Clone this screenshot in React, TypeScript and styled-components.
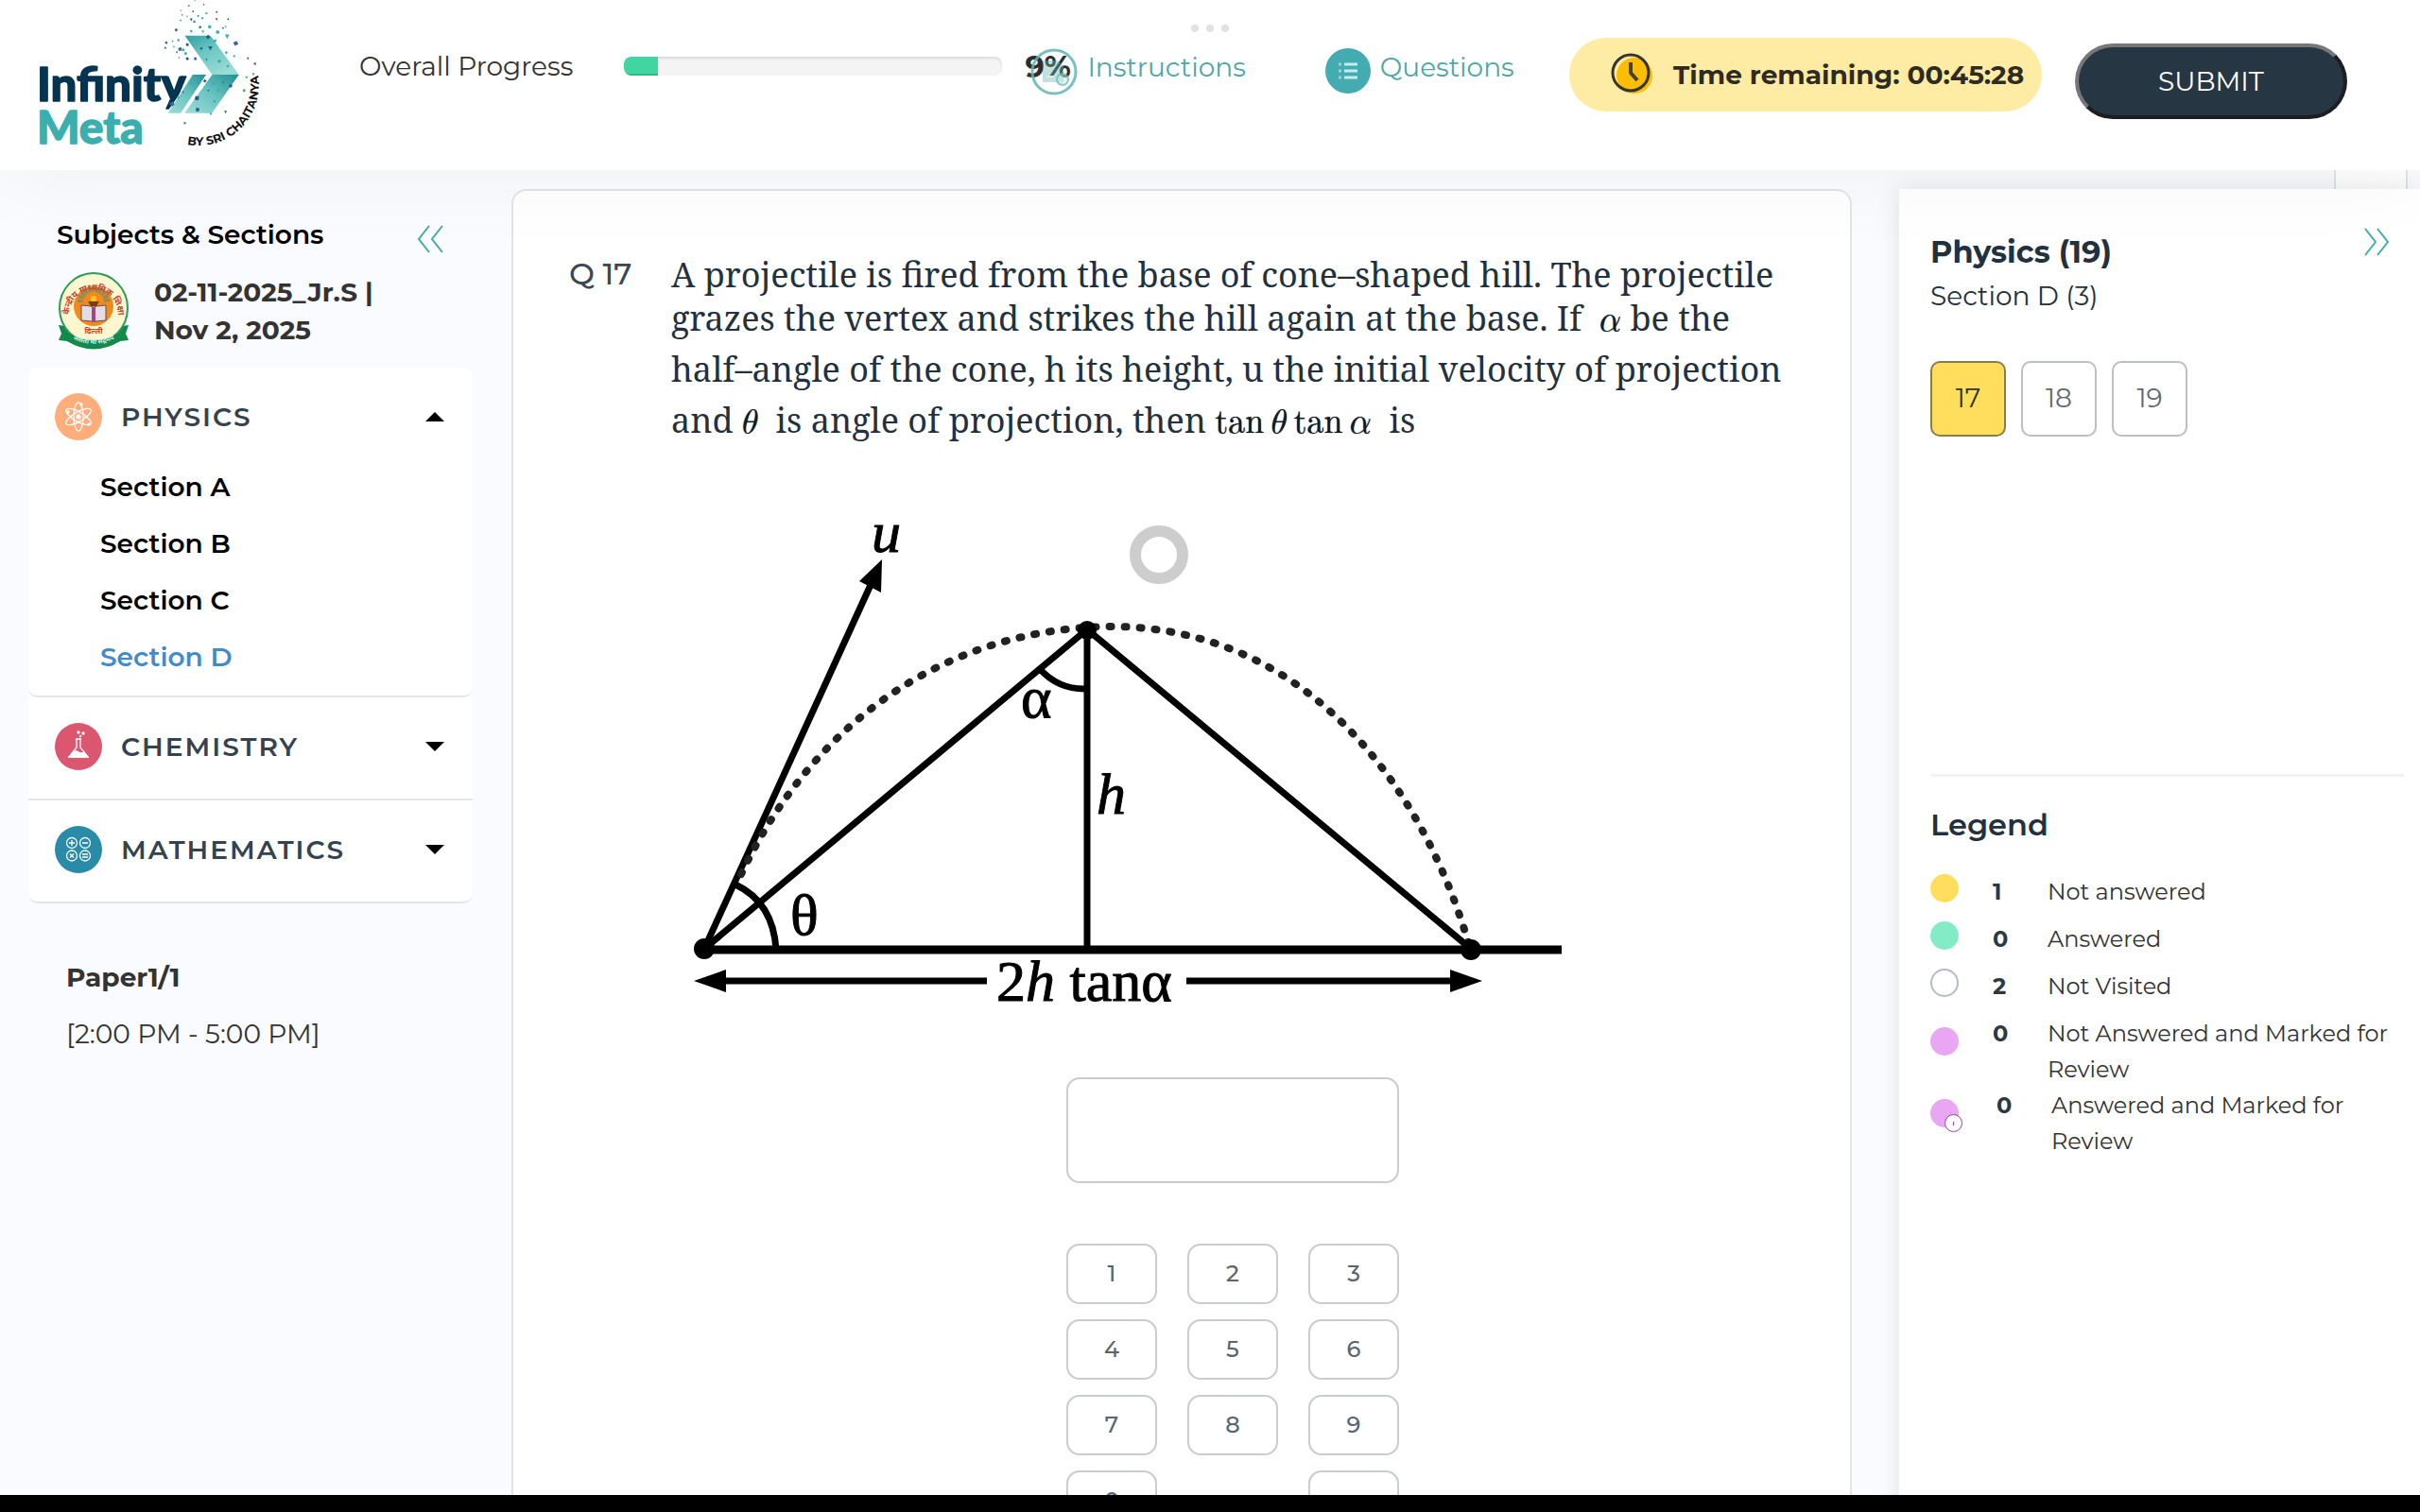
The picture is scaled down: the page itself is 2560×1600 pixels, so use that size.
import React, { useState } from "react";
import styled, { createGlobalStyle, css } from "styled-components";

const sans = `Montserrat, Inter, "Open Sans", sans-serif`;
const serif = `"Noto Serif", "DejaVu Serif", serif`;
const mathFont = `"Latin Modern Math", "STIX Two Math", "Liberation Serif", serif`;
const teal = "#4fa7a6";
const ink = "#22313d";

const GlobalStyle = createGlobalStyle`
  *, *::before, *::after { box-sizing: border-box; }
  body { margin: 0; font-family: ${sans}; color: #333; font-size: 28px; background: #fafbff; }
  h1, h2, h3, p, ul { margin: 0; padding: 0; font-size: inherit; font-weight: inherit; }
  ul { list-style: none; }
  button, input { font-family: inherit; color: inherit; }
  a { color: inherit; text-decoration: none; }
  svg { display: block; }
`;

const Page = styled.div`
  height: 100vh;
  display: flex;
  flex-direction: column;
  overflow: hidden;
`;

/* ---------- header ---------- */

const Header = styled.header`
  position: relative;
  z-index: 2;
  flex: none;
  display: flex;
  align-items: flex-start;
  height: 180px;
  padding: 0 77px 0 20px;
  background: #fff;
  box-shadow: 0 0 100px rgba(0, 0, 0, 0.05);
`;

const LogoLink = styled.a`
  flex: none;
  width: 270px;
`;

const Progress = styled.div`
  display: flex;
  align-items: center;
  height: 40px;
  margin: 50px 0 0 90px;
  white-space: nowrap;
`;

const ProgressTrack = styled.div`
  width: 400px;
  height: 20px;
  margin: 0 24px 0 54px;
  border-radius: 8px;
  background: #f4f4f4;
  box-shadow: inset 0 2px 3px rgba(0, 0, 0, 0.1);
  overflow: hidden;
`;

const ProgressFill = styled.div`
  height: 100%;
  background: #3fd6a1;
  box-shadow: inset 0 -2px 0 rgba(0, 0, 0, 0.15);
`;

const Percent = styled.strong`
  width: 44px;
  font-size: 32px;
  font-weight: 700;
  color: #2d2d2d;
`;

const Nav = styled.nav`
  display: flex;
  gap: 84px;
  margin: 51px 0 0 -38px;
`;

const NavLink = styled.a`
  display: flex;
  gap: 10px;
  line-height: 40px;
  color: ${teal};
`;

const Actions = styled.div`
  display: flex;
  align-items: flex-start;
  gap: 35px;
  margin-left: auto;
`;

const Timer = styled.div`
  display: flex;
  align-items: center;
  gap: 16px;
  width: 500px;
  height: 78px;
  margin-top: 40px;
  padding-left: 40px;
  border-radius: 39px;
  background: #ffeca4;
  font-weight: 700;
  color: #2e2c22;
  white-space: nowrap;
`;

const Submit = styled.button`
  width: 288px;
  height: 80px;
  margin-top: 46px;
  border: 4px solid;
  border-color: #757779 #1c1f21 #1c1f21 #757779;
  border-radius: 40px;
  background: #263642;
  color: #fff;
  font-size: 28px;
`;

const MoreDots = styled.div`
  position: absolute;
  top: 26px;
  left: 50%;
  display: flex;
  gap: 8px;
  transform: translateX(-50%);
  i {
    width: 8px;
    height: 8px;
    border-radius: 50%;
    background: #e2e2e2;
  }
`;

/* ---------- columns ---------- */

const Columns = styled.main`
  flex: 1;
  min-height: 0;
  position: relative;
  display: grid;
  grid-template-columns: 470px minmax(0, 1fr) 551px;
  padding-left: 30px;
  overflow: hidden;
`;

const SystemBar = styled.div`
  position: relative;
  z-index: 3;
  flex: none;
  height: 18px;
  background: #000;
`;

/* ---------- left sidebar ---------- */

const Sidebar = styled.aside`
  padding-top: 48px;
`;

const SidebarHead = styled.div`
  display: flex;
  justify-content: space-between;
  align-items: flex-end;
  padding: 0 30px;
  height: 40px;
  font-weight: 600;
  line-height: 40px;
  color: #000;
`;

const IconButton = styled.button`
  display: flex;
  padding: 0;
  border: 0;
  background: none;
  cursor: pointer;
`;

const Exam = styled.div`
  display: flex;
  align-items: center;
  gap: 25px;
  padding: 20px 0 19px 30px;
  font-weight: 700;
  line-height: 40px;
  white-space: pre-line;
`;

const Subject = styled.section`
  padding-bottom: 3px;
  border-bottom: 2px solid #e3e5e7;
  border-radius: 10px;
  background: #fff;
  & + & { border-top-left-radius: 0; border-top-right-radius: 0; }
  &:nth-child(2) { border-radius: 0; }
`;

const SubjectToggle = styled.button`
  display: flex;
  align-items: center;
  gap: 20px;
  width: 100%;
  height: 104px;
  padding: 0 30px 0 28px;
  border: 0;
  background: none;
  font-size: 28px;
  font-weight: 600;
  letter-spacing: 2px;
  color: #34434f;
  svg:last-child { margin-left: auto; }
`;

const SectionList = styled.ul`
  margin-top: -8px;
  padding: 0 0 8px 76px;
`;

const SectionLink = styled.a<{ $active: boolean }>`
  display: block;
  line-height: 60px;
  font-weight: 600;
  color: ${(p) => (p.$active ? "#428bca" : "#000")};
`;

const Paper = styled.div`
  padding: 48px 40px 0;
  line-height: 60px;
  strong { font-weight: 700; display: block; }
`;

/* ---------- question ---------- */

const QuestionCard = styled.section`
  display: grid;
  grid-template-columns: 108px minmax(0, 1fr);
  align-content: start;
  margin: 20px 50px 0 41px;
  padding: 66px 59px 0;
  border: 2px solid #e2e4e6;
  border-bottom: 0;
  border-radius: 16px 16px 0 0;
  background: #fff;
`;

const QuestionNumber = styled.h2`
  line-height: 44px;
  font-size: 32px;
  font-weight: 500;
  color: #3a4854;
`;

const QuestionText = styled.p`
  font-family: ${serif};
  font-size: 36px;
  line-height: 46px;
  color: ${ink};
`;

const Maths = styled.span<{ $above?: boolean; $below?: boolean }>`
  display: inline-block;
  font-family: ${mathFont};
  font-size: 36px;
  line-height: 36px;
  white-space: nowrap;
  color: #101c26;
  text-shadow: 0 0 1px #101c26;
  ${(p) => p.$above && css`padding-top: 15px;`}
  ${(p) => p.$below && css`padding-bottom: 11px;`}
`;

const Figure = styled.figure`
  margin: 77px 0 0 10px;
  svg { width: 940px; max-width: 100%; height: auto; }
  text { font-family: "Liberation Serif", "Times New Roman", serif; font-size: 62px; stroke: #000; stroke-width: 1; }
`;

const AnswerPad = styled.div`
  display: grid;
  grid-template-columns: repeat(3, 96px);
  gap: 16px 32px;
  justify-content: center;
  margin-top: 70px;
`;

const AnswerInput = styled.input`
  grid-column: 1 / -1;
  width: 100%;
  height: 112px;
  margin-bottom: 48px;
  padding: 0 24px;
  border: 2px solid #c8cdd1;
  border-radius: 14px;
  background: #fff;
  font-size: 32px;
`;

const Key = styled.button`
  height: 64px;
  padding: 0 0 2px;
  border: 2px solid #c8cdd1;
  border-radius: 14px;
  background: #fff;
  font-size: 24px;
  font-weight: 500;
  color: #5a6570;
`;

/* ---------- palette ---------- */

const DrawerTab = styled.div`
  position: absolute;
  top: -20px;
  right: 13px;
  width: 78px;
  height: 60px;
  border: 2px solid #e2e4e6;
  background: #fff;
`;

const Palette = styled.aside`
  position: relative;
  margin-top: 20px;
  padding: 41px 17px 0 33px;
  background: #fff;
  box-shadow: 0 0 24px rgba(0, 0, 0, 0.1);
`;

const PaletteHead = styled.div`
  display: flex;
  justify-content: space-between;
  align-items: flex-start;
  padding-right: 14px;
  color: ${ink};
  h2 { font-size: 32px; font-weight: 700; line-height: 52px; }
  p { line-height: 40px; }
`;

const NumberGrid = styled.div`
  display: flex;
  gap: 16px;
  height: 489px;
  padding-top: 49px;
  border-bottom: 3px solid #f1f2f6;
`;

const NumberButton = styled.button<{ $current: boolean }>`
  width: 80px;
  height: 80px;
  padding: 0 0 2px;
  border: 2px solid ${(p) => (p.$current ? "#8a7d4c" : "#b9bfc4")};
  border-radius: 10px;
  background: ${(p) => (p.$current ? "#ffde5e" : "#fff")};
  color: ${(p) => (p.$current ? "#33322a" : "#5f6a73")};
  font-size: 28px;
`;

const LegendTitle = styled.h3`
  margin: 31px 0 26px;
  font-size: 32px;
  font-weight: 600;
  line-height: 40px;
  color: ${ink};
`;

const LegendItem = styled.li<{ $tall: boolean; $shift: boolean }>`
  display: grid;
  grid-template-columns: ${(p) => (p.$shift ? "70px 58px 1fr" : "66px 58px 1fr")};
  padding: ${(p) => (p.$shift ? "0" : p.$tall ? "6px 0 0" : "6px 0")};
  font-size: 24px;
  line-height: 38px;
  strong { font-weight: 700; color: #2b3944; }
  span { min-width: 0; max-width: 370px; }
`;

const Dot = styled.div<{ $color: string; $outline: boolean; $low: boolean }>`
  position: relative;
  width: 30px;
  height: 30px;
  margin-top: ${(p) => (p.$low ? "12px" : "0")};
  border-radius: 50%;
  background: ${(p) => p.$color};
  border: ${(p) => (p.$outline ? "2px solid #b5bcc4" : "0")};
`;

const DotBadge = styled.b`
  position: absolute;
  left: 15px;
  top: 16px;
  width: 19px;
  height: 19px;
  border: 1px solid #a13bb8;
  border-radius: 50%;
  background: #fff;
  &::after {
    content: "";
    position: absolute;
    left: 8px;
    top: 7px;
    width: 1px;
    height: 4px;
    background: #a13bb8;
  }
`;

/* The touch cursor floats above the question. */
const TouchRing = styled.div`
  position: absolute;
  z-index: 1;
  left: 1195px;
  top: 376px;
  width: 62px;
  height: 62px;
  border: 12px solid #cdcdcd;
  border-radius: 50%;
  background: #fff;
`;

/* ---------- drawings ---------- */

const specks: [number, number, number, string][] = [
  [552, 3, 4, "#3a9aa0"], [533, 18, 5, "#2f8f99"], [580, 14, 4, "#2b6d99"], [508, 34, 5, "#3a9aa0"], [546, 36, 5, "#2b6d99"],
  [588, 42, 6, "#3aafad"], [512, 48, 6, "#4a6fa8"], [562, 50, 5, "#2b6d99"], [620, 38, 5, "#2b6d99"], [540, 62, 9, "#275c88"],
  [575, 57, 6, "#3aafad"], [550, 68, 7, "#3a9aa0"], [620, 61, 8, "#3b62a0"], [656, 60, 5, "#2b6d99"], [507, 64, 5, "#3aafad"],
  [528, 52, 5, "#3b62a0"], [598, 84, 9, "#3aafad"], [568, 85, 7, "#2b6d99"], [648, 85, 7, "#3aafad"], [493, 94, 8, "#3b62a0"],
  [540, 98, 7, "#3aafad"], [577, 100, 9, "#3aafad"], [623, 101, 10, "#3aafad"], [640, 88, 5, "#2b6d99"], [653, 115, 14, "#3aafad"],
  [680, 136, 12, "#3b62a0"], [500, 126, 7, "#3aafad"], [482, 130, 5, "#3b62a0"], [462, 134, 7, "#3b62a0"], [459, 150, 6, "#4a6fa8"],
  [486, 148, 7, "#3aafad"], [505, 154, 10, "#3b62a0"], [528, 140, 8, "#275c88"], [495, 165, 7, "#275c88"], [523, 168, 8, "#3aafad"],
  [528, 184, 8, "#275c88"], [502, 182, 6, "#3aafad"], [553, 184, 8, "#2b6d99"], [515, 156, 8, "#3aafad"], [545, 122, 10, "#3aafad"],
  [593, 116, 10, "#275c88"], [615, 128, 8, "#3aafad"], [600, 152, 14, "#275c88"], [572, 152, 7, "#3b62a0"], [650, 165, 7, "#3aafad"],
  [588, 188, 7, "#2b6d99"], [628, 192, 9, "#3aafad"], [675, 176, 6, "#3aafad"], [718, 184, 8, "#3b62a0"], [740, 200, 7, "#4a6fa8"],
  [655, 208, 7, "#3aafad"], [714, 244, 9, "#3aafad"], [735, 232, 6, "#3aafad"], [664, 270, 9, "#275c88"], [640, 260, 7, "#3b62a0"],
  [583, 254, 8, "#275c88"], [610, 262, 8, "#3aafad"], [625, 285, 9, "#3aafad"], [706, 284, 8, "#3aafad"], [558, 308, 12, "#275c88"],
  [594, 285, 7, "#3b62a0"], [540, 262, 7, "#3aafad"], [480, 326, 12, "#3b62a0"], [500, 308, 9, "#3aafad"], [560, 344, 10, "#275c88"],
  [613, 318, 7, "#3aafad"], [648, 352, 9, "#3b62a0"], [602, 357, 6, "#3aafad"], [520, 386, 6, "#3b62a0"], [515, 290, 7, "#3b62a0"],
];

function Logo() {
  return (
    <svg viewBox="0 0 800 510" width="270" height="172" role="img" aria-label="Infinity Meta by Sri Chaitanya">
      <defs>
        <linearGradient id="upper" x1="0" y1="0" x2="0.7" y2="1">
          <stop offset="0" stopColor="#2f9ea1" />
          <stop offset="0.45" stopColor="#6ac7c2" />
          <stop offset="1" stopColor="#9bdcd6" />
        </linearGradient>
        <linearGradient id="lower" x1="1" y1="0" x2="0" y2="1">
          <stop offset="0" stopColor="#1f8f94" />
          <stop offset="0.5" stopColor="#67c4bf" />
          <stop offset="1" stopColor="#9fddd8" />
        </linearGradient>
        <path id="byline" d="M528 453 A 188 188 0 0 0 741 205" />
      </defs>
      <g fontFamily="Lato, Montserrat, sans-serif" fontWeight="900" strokeLinejoin="round" strokeWidth="4">
        <text x="56" y="316" fontSize="146" fill="#04344f" stroke="#04344f">Infinity</text>
        <text x="56" y="452" fontSize="142" fill="#3aafad" stroke="#3aafad">Meta</text>
      </g>
      <path d="M546 234H606V420H446L462 355z" fill="#fff" />
      <path d="M545 234h42l-80 121h-40z" fill="url(#lower)" />
      <path d="M520 112h80l90 122h-84z" fill="url(#upper)" />
      <path d="M606 234h84l-85 121h-86z" fill="url(#lower)" />
      {specks.map(([x, y, s, c], i) =>
        i % 3 ? (
          <rect key={i} x={x - s / 2} y={y - s / 2} width={s} height={s} fill={c} transform={`rotate(${i * 17} ${x} ${y})`} />
        ) : (
          <path key={i} d={`M${x - s / 2} ${y - s / 2}h${s}l${-s / 2} ${s}z`} fill={c} />
        )
      )}
      <text fontFamily={sans} fontWeight="700" fontSize="37" fill="#111">
        <textPath href="#byline">BY SRI CHAITANYA</textPath>
      </text>
    </svg>
  );
}

function Emblem() {
  return (
    <svg viewBox="0 0 78 82" width="78" height="82" role="img" aria-label="Board emblem">
      <defs>
        <path id="emblem-top" d="M13 45 A 26 26 0 1 1 65 45" />
        <path id="emblem-ribbon" d="M12 68 Q 39 84 66 68" />
      </defs>
      <path d="M2 56l14 2 46 0 14-2-3 9 3 7-9 1q-28 17-56 0l-9-1 3-7z" fill="#128a4b" />
      <ellipse cx="39" cy="38" rx="36" ry="37" fill="#fdf7cf" stroke="#2f9a5b" strokeWidth="2" />
      <path d="M8 62q31 20 62 0l-3 11q-28 14-56 0z" fill="#128a4b" />
      <circle cx="39" cy="36" r="21" fill="#f08a1d" />
      <path d="M25 32a14 14 0 0 1 28 0" fill="none" stroke="#8f8a5c" strokeWidth="6" strokeDasharray="3 1" />
      <path d="M33 31h12l-3 5h-6z" fill="#7a3b12" />
      <circle cx="39" cy="28" r="3" fill="#ffc62e" />
      <path d="M26 35l10 1 3 2 3-2 10-1v16l-11 1h-4l-11-1z" fill="#e3dce0" stroke="#6a4a5a" strokeWidth="1" />
      <path d="M37 37h4v16h-4z" fill="#a0468b" />
      <text fontFamily="'Noto Sans Devanagari', 'Noto Sans', sans-serif" fontSize="9" fontWeight="700" fill="#c8402c">
        <textPath href="#emblem-top">केन्द्रीय माध्यमिक शिक्षा बोर्ड</textPath>
      </text>
      <text x="39" y="65" textAnchor="middle" fontFamily="'Noto Sans Devanagari', 'Noto Sans', sans-serif" fontSize="8" fontWeight="700" fill="#c8402c">दिल्ली</text>
      <text fontFamily="'Noto Sans Devanagari', 'Noto Sans', sans-serif" fontSize="7" fill="#d5efdf">
        <textPath href="#emblem-ribbon" startOffset="50%" textAnchor="middle">असतो मा सद्गमय</textPath>
      </text>
    </svg>
  );
}

function InstructionsIcon() {
  return (
    <svg width="50" height="50" viewBox="0 0 50 50" aria-hidden="true">
      <circle cx="25" cy="25" r="23" fill="none" stroke="#63b5b3" strokeOpacity="0.85" strokeWidth="3" />
      <path d="M13 13h16l6 6v17H13z" fill="#63b5b3" fillOpacity="0.4" />
      <path d="M17 30h8" stroke="#d6eeec" strokeWidth="2" />
      <circle cx="34" cy="33" r="6" fill="#c9e8e5" fillOpacity="0.5" stroke="#63b5b3" strokeOpacity="0.7" strokeWidth="2" />
    </svg>
  );
}

function QuestionsIcon() {
  return (
    <svg width="48" height="48" viewBox="0 0 48 48" aria-hidden="true">
      <circle cx="24" cy="24" r="24" fill="#44acb0" />
      <path d="M20 17h14M20 24h14M20 31h14" stroke="#c3eeed" strokeWidth="3" />
      <path d="M14 17h3M14 24h3M14 31h3" stroke="#8fd6d6" strokeWidth="3" />
    </svg>
  );
}

function ClockIcon() {
  return (
    <svg width="54" height="50" viewBox="0 0 54 50" aria-hidden="true">
      <circle cx="29" cy="26" r="19" fill="#fdbe02" />
      <circle cx="25" cy="23" r="19" fill="none" stroke="#35352d" strokeWidth="3" />
      <path d="M25 12v11l7 8" fill="none" stroke="#4a4020" strokeWidth="4" />
    </svg>
  );
}

function DoubleChevron({ flip = false }: { flip?: boolean }) {
  return (
    <svg width="30" height="30" viewBox="0 0 30 30" fill="none" stroke="#45aaa9" strokeWidth="2" aria-hidden="true">
      <path d={flip ? "M3 1l11 14L3 29M16 1l11 14-11 14" : "M14 1L3 15l11 14M28 1L17 15l11 14"} />
    </svg>
  );
}

function Caret({ up }: { up: boolean }) {
  return (
    <svg width="20" height="10" viewBox="0 0 20 10" aria-hidden="true">
      <path d={up ? "M0 10L10 0l10 10z" : "M0 0l10 10L20 0z"} fill="#000" />
    </svg>
  );
}

function SubjectIcon({ name }: { name: string }) {
  const color = name === "Physics" ? "#ffad7a" : name === "Chemistry" ? "#db5770" : "#2a8ba9";
  return (
    <svg width="50" height="50" viewBox="0 0 50 50" aria-hidden="true">
      <circle cx="25" cy="25" r="25" fill={color} />
      <g fill="none" stroke="#fff" strokeWidth="1.3">
        {name === "Physics" && (
          <>
            <ellipse cx="25" cy="25" rx="5" ry="15" />
            <ellipse cx="25" cy="25" rx="5" ry="15" transform="rotate(60 25 25)" />
            <ellipse cx="25" cy="25" rx="5" ry="15" transform="rotate(120 25 25)" />
            <circle cx="25" cy="25" r="2" fill="#fff" />
            <circle cx="28" cy="12" r="1" fill="#fff" />
            <circle cx="36" cy="33" r="1" fill="#fff" />
            <circle cx="14" cy="20" r="1" fill="#fff" />
          </>
        )}
        {name === "Chemistry" && (
          <>
            <path d="M22 17h6M23 17v9l-8 10h20l-8-10v-9" />
            <path d="M19 31q4-2 6 0t6 0l4 5H15z" fill="#fff" />
            <circle cx="25" cy="10" r="1" />
            <circle cx="30" cy="11" r="1" />
            <circle cx="27" cy="14" r="0.6" />
            <circle cx="22" cy="33" r="1" fill={color} />
          </>
        )}
        {name === "Mathematics" && (
          <>
            <circle cx="18" cy="18" r="5.5" />
            <circle cx="32" cy="18" r="5.5" />
            <circle cx="18" cy="31.500" r="5.5" />
            <circle cx="32" cy="31.500" r="5.5" />
            <path d="M15 18h6M18 15v6M29 18h6M16 29.500l4 4M20 29.500l-4 4M29 30h6M29 33h6" />
          </>
        )}
      </g>
    </svg>
  );
}

function ProjectileDiagram() {
  return (
    <svg viewBox="720 545 940 525" role="img" aria-label="Projectile grazing the vertex of a cone">
      <g fill="none" stroke="#000" strokeWidth="7">
        <path d="M740 1005H1652" strokeWidth="9" />
        <path d="M745 1004L926 608" />
        <path d="M745 1004L1150 666L1556 1004" />
        <path d="M1150 666V1004" />
        <path d="M778 936Q818 955 821 1005" />
        <path d="M1100 708Q1120 730 1150 729" />
        <path
          d="M784 925C860 765 1000 665 1175 663C1380 663 1505 830 1554 1000"
          stroke="#222"
          strokeWidth="8"
          strokeLinecap="round"
          strokeDasharray="2 14"
        />
        <path d="M760 1038H1044M1255 1038H1545" />
      </g>
      <path d="M933 592L909 615L932 627z" />
      <path d="M734 1038l34-12v24z" />
      <path d="M1568 1038l-34-12v24z" />
      <circle cx="745" cy="1004" r="11" />
      <circle cx="1556" cy="1005" r="11" />
      <circle cx="1150" cy="667" r="10" />
      <text x="922" y="584" fontStyle="italic">u</text>
      <text x="1080" y="759">α</text>
      <text x="1160" y="861" fontStyle="italic">h</text>
      <text x="836" y="989">θ</text>
      <text x="1054" y="1059">
        2<tspan fontStyle="italic">h</tspan> tanα
      </text>
    </svg>
  );
}

/* ---------- data ---------- */

const subjects = [
  { name: "Physics", sections: ["Section A", "Section B", "Section C", "Section D"] },
  { name: "Chemistry", sections: [] },
  { name: "Mathematics", sections: [] },
];

const legend = [
  { color: "#ffde5e", count: 1, label: "Not answered" },
  { color: "#83ecc6", count: 0, label: "Answered" },
  { color: "#fff", count: 2, label: "Not Visited", outline: true },
  { color: "#e8a6f3", count: 0, label: "Not Answered and Marked for Review", tall: true },
  { color: "#e8a6f3", count: 0, label: "Answered and Marked for Review", tall: true, badge: true },
];

const progress = 9;

export default function App() {
  const [open, setOpen] = useState("Physics");
  const [answer, setAnswer] = useState("");
  const press = (key: string) => setAnswer((a) => a + key);

  return (
    <Page>
      <GlobalStyle />
      <Header>
        <LogoLink href="#home"><Logo /></LogoLink>
        <Progress>
          <span>Overall Progress</span>
          <ProgressTrack role="progressbar" aria-label="Overall Progress" aria-valuenow={progress}>
            <ProgressFill style={{ width: `${progress}%` }} />
          </ProgressTrack>
          <Percent>{progress}%</Percent>
        </Progress>
        <Nav>
          <NavLink href="#instructions"><InstructionsIcon />Instructions</NavLink>
          <NavLink href="#questions"><QuestionsIcon />Questions</NavLink>
        </Nav>
        <Actions>
          <Timer><ClockIcon />Time remaining: 00:45:28</Timer>
          <Submit type="button">SUBMIT</Submit>
        </Actions>
        <MoreDots aria-hidden="true"><i /><i /><i /></MoreDots>
      </Header>

      <Columns>
        <Sidebar>
          <SidebarHead>
            <h2>Subjects &amp; Sections</h2>
            <IconButton type="button" aria-label="Collapse subjects"><DoubleChevron /></IconButton>
          </SidebarHead>
          <Exam>
            <Emblem />
            <p>{"02-11-2025_Jr.S |\nNov 2, 2025"}</p>
          </Exam>
          <div>
            {subjects.map((s) => (
              <Subject key={s.name}>
                <SubjectToggle type="button" aria-expanded={open === s.name} onClick={() => setOpen(s.name)}>
                  <SubjectIcon name={s.name} />
                  {s.name.toUpperCase()}
                  <Caret up={open === s.name} />
                </SubjectToggle>
                {open === s.name && s.sections.length > 0 && (
                  <SectionList>
                    {s.sections.map((name) => (
                      <li key={name}>
                        <SectionLink href="#section" $active={name === "Section D"}>{name}</SectionLink>
                      </li>
                    ))}
                  </SectionList>
                )}
              </Subject>
            ))}
          </div>
          <Paper>
            <strong>Paper1/1</strong>
            [2:00 PM - 5:00 PM]
          </Paper>
        </Sidebar>

        <QuestionCard>
          <QuestionNumber>Q 17</QuestionNumber>
          <div>
            <QuestionText>
              A projectile is fired from the base of cone–shaped hill. The projectile grazes the vertex and strikes
              the hill again at the base. If &nbsp;<Maths $below>𝛼</Maths> be the half–angle of the cone, h its height,
              u the initial velocity of projection and <Maths $above>𝜃</Maths>&nbsp; is angle of projection, then{" "}
              <Maths $above>{"tan\u2009𝜃\u2009tan\u2009𝛼"}</Maths>&nbsp; is
            </QuestionText>
            <Figure><ProjectileDiagram /></Figure>
            <AnswerPad>
              <AnswerInput aria-label="Your answer" value={answer} onChange={(e) => setAnswer(e.target.value)} />
              {["1", "2", "3", "4", "5", "6", "7", "8", "9", "0"].map((k) => (
                <Key key={k} type="button" onClick={() => press(k)}>{k}</Key>
              ))}
              <span />
              <Key type="button" aria-label="Decimal point" onClick={() => press(".")}>.</Key>
            </AnswerPad>
          </div>
        </QuestionCard>

        <DrawerTab aria-hidden="true" />
        <Palette>
          <PaletteHead>
            <div>
              <h2>Physics (19)</h2>
              <p>Section D (3)</p>
            </div>
            <IconButton type="button" aria-label="Collapse palette"><DoubleChevron flip /></IconButton>
          </PaletteHead>
          <NumberGrid>
            {[17, 18, 19].map((n) => (
              <NumberButton key={n} type="button" $current={n === 17}>{n}</NumberButton>
            ))}
          </NumberGrid>
          <LegendTitle>Legend</LegendTitle>
          <ul>
            {legend.map((l) => (
              <LegendItem key={l.label} $tall={!!l.tall} $shift={!!l.badge}>
                <Dot $color={l.color} $outline={!!l.outline} $low={!!l.tall}>{l.badge && <DotBadge />}</Dot>
                <strong>{l.count}</strong>
                <span>{l.label}</span>
              </LegendItem>
            ))}
          </ul>
        </Palette>
        <TouchRing aria-hidden="true" />
      </Columns>
      <SystemBar />
    </Page>
  );
}
